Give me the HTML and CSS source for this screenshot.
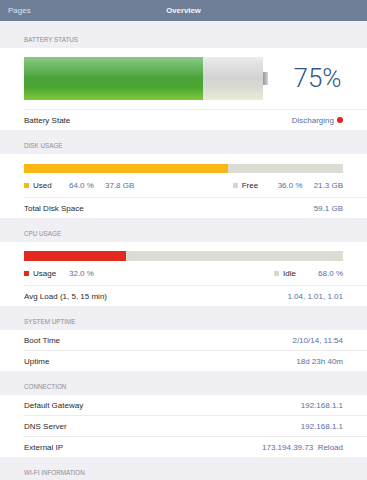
FILE: index.html
```html
<!DOCTYPE html>
<html>
<head>
<meta charset="utf-8">
<link rel="stylesheet" href="styles.css">
</head>
<body>
<header class="nav">
  <span class="nav-left">Pages</span>
  <span class="nav-title">Overview</span>
  <span></span>
</header>

<div class="group-header first">BATTERY STATUS</div>
<section class="group">
  <div class="battery-row">
    <div class="battery">
      <div class="battery-body"><div class="battery-fill" style="width:75%"></div></div>
      <div class="battery-cap"></div>
    </div>
    <div class="battery-pct">75%</div>
  </div>
  <div class="row"><span class="label">Battery State</span><span class="value">Discharging <span class="dot"></span></span></div>
</section>

<div class="group-header">DISK USAGE</div>
<section class="group">
  <div class="bar-wrap disk"><div class="bar"><div class="bar-fill orange" style="width:64%"></div></div></div>
  <div class="legend">
    <div class="lg"><span class="sq orange"></span><span class="lg-label">Used</span><span class="lg-pct">64.0 %</span><span class="value">37.8 GB</span></div>
    <div class="lg"><span class="sq grey"></span><span class="lg-label">Free</span><span class="lg-pct">36.0 %</span><span class="value">21.3 GB</span></div>
  </div>
  <div class="row"><span class="label">Total Disk Space</span><span class="value">59.1 GB</span></div>
</section>

<div class="group-header">CPU USAGE</div>
<section class="group">
  <div class="bar-wrap cpu"><div class="bar"><div class="bar-fill red" style="width:32%"></div></div></div>
  <div class="legend">
    <div class="lg"><span class="sq red"></span><span class="lg-label">Usage</span><span class="lg-pct">32.0 %</span></div>
    <div class="lg"><span class="sq grey"></span><span class="lg-label short">Idle</span><span class="value">68.0 %</span></div>
  </div>
  <div class="row"><span class="label">Avg Load (1, 5, 15 min)</span><span class="value">1.04, 1.01, 1.01</span></div>
</section>

<div class="group-header">SYSTEM UPTIME</div>
<section class="group">
  <div class="row"><span class="label">Boot Time</span><span class="value">2/10/14, 11:54</span></div>
  <div class="row"><span class="label">Uptime</span><span class="value">18d 23h 40m</span></div>
</section>

<div class="group-header">CONNECTION</div>
<section class="group">
  <div class="row"><span class="label">Default Gateway</span><span class="value">192.168.1.1</span></div>
  <div class="row"><span class="label">DNS Server</span><span class="value">192.168.1.1</span></div>
  <div class="row"><span class="label">External IP</span><span class="value">173.194.39.73&nbsp;&nbsp;Reload</span></div>
</section>

<div class="group-header">WI-FI INFORMATION</div>
</body>
</html>
```
FILE: styles.css
```css
html, body {
  margin: 0;
  padding: 0;
}
body {
  background: #efeff4;
  font-family: "Liberation Sans", Arial, sans-serif;
  font-size: 8px;
  color: #2a2a2a;
  overflow: hidden;
}
.nav {
  height: 21px;
  background: #6e7f97;
  display: grid;
  grid-template-columns: 1fr auto 1fr;
  align-items: center;
  padding: 0 8px;
  color: #fff;
}
.nav-left {
  color: #dde3ec;
  font-size: 8px;
}
.nav-title {
  font-weight: bold;
  font-size: 7.8px;
  color: #f6f8fb;
}
.group-header {
  height: 24px;
  box-sizing: border-box;
  display: flex;
  align-items: flex-end;
  padding: 0 24px 5px;
  font-size: 6.3px;
  line-height: 7px;
  color: #8e8e93;
}
.group-header.first {
  height: 27px;
  padding-bottom: 5px;
}
.group {
  background: #fff;
}
.row {
  margin-left: 24px;
  padding-right: 24px;
  height: 20px;
  display: flex;
  align-items: center;
  justify-content: space-between;
}
.row + .row, .legend + .row, .battery-row + .row {
  border-top: 1px solid #ececef;
}
.value {
  color: #5470a6;
  display: inline-flex;
  align-items: center;
}
.dot {
  display: inline-block;
  width: 6px;
  height: 6px;
  border-radius: 50%;
  background: #e8221a;
  margin-left: 3px;
}
.battery-row {
  height: 61px;
  box-sizing: border-box;
  padding-top: 9px;
  display: flex;
  align-items: flex-start;
  margin-left: 24px;
}
.battery {
  display: flex;
  align-items: center;
  height: 43px;
}
.battery-body {
  width: 239px;
  height: 43px;
  background: linear-gradient(#ececec 0%, #e0e0e0 20%, #d3d3d3 50%, #dcdcd4 75%, #ebebd9 100%);
  overflow: hidden;
}
.battery-fill {
  height: 100%;
  background: linear-gradient(#8cc985 0%, #6db864 22%, #4ba33a 48%, #4aa532 70%, #6ebd37 90%, #80c73c 100%);
}
.battery-cap {
  width: 5px;
  height: 13px;
  background: linear-gradient(90deg, #9a9a9a, #b8b8b8 60%, #d8d8d8);
}
.battery-pct {
  flex: 1;
  text-align: center;
  font-family: Roboto, "Liberation Sans", sans-serif;
  font-weight: 300;
  font-size: 26px;
  line-height: 43px;
  color: #34558f;
}
.bar-wrap {
  margin: 0 24px;
}
.bar-wrap.disk {
  padding-top: 10px;
}
.bar-wrap.cpu {
  padding-top: 9px;
}
.bar {
  background: #dcdcd3;
  display: flex;
}
.disk .bar { height: 9px; }
.cpu .bar { height: 10px; }
.bar-fill.orange { background: #fbb714; }
.bar-fill.red { background: #e22a1e; }
.legend {
  margin-left: 24px;
  padding-right: 24px;
  height: 24px;
  display: flex;
  align-items: center;
  justify-content: space-between;
}
.lg {
  display: flex;
  align-items: center;
}
.sq {
  width: 5px;
  height: 5px;
  margin-right: 4px;
}
.sq.orange { background: #fbb714; }
.sq.red { background: #e22a1e; }
.sq.grey { background: #d6d6ce; }
.lg-label {
  width: 36px;
}
.lg-label.short {
  width: 35px;
}
.lg-pct {
  width: 36px;
  color: #5470a6;
}
```
